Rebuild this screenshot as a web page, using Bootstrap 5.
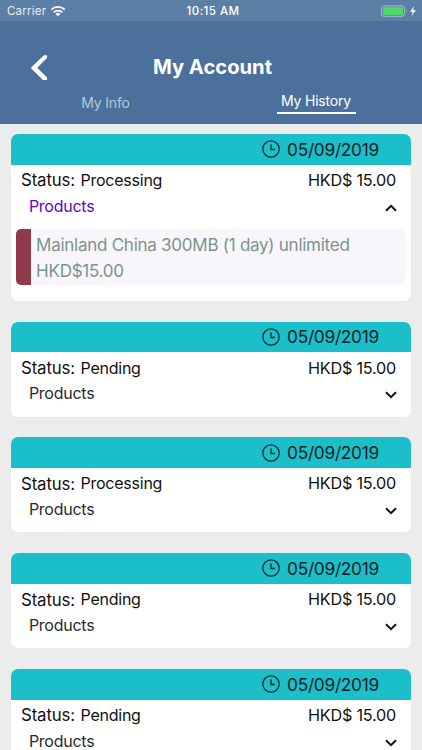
<!DOCTYPE html>
<html lang="en">
<head>
<meta charset="utf-8">
<meta name="viewport" content="width=device-width, initial-scale=1">
<title>My Account</title>
<link href="https://cdn.jsdelivr.net/npm/bootstrap@5.3.0/dist/css/bootstrap.min.css" rel="stylesheet">
<style>
body{font-family:Inter,"Liberation Sans",sans-serif;color:#111;background:#ececec;height:750px;line-height:20px}
.screen{height:750px}
.topbar{background:#4a709b;height:123.5px;color:#fff}
.statusbar{background:#5c7fa5;height:21px;font-size:11.5px;padding:0 5px 0 7px}
.statusbar>div{flex:1 1 0}
.clock-text{font-weight:500;letter-spacing:.45px;padding-left:2px}
.carrier{letter-spacing:.22px;color:#e9eff5}
.titlebar{height:69px;padding-top:25px}
.back-btn{width:78px}
.page-title{font-size:20.2px;font-weight:700;line-height:42px;letter-spacing:-.02px;padding-left:3px}
.tab-link{font-size:14px;letter-spacing:-.2px;line-height:17px;color:#b9c8d8;border-bottom:2px solid transparent}
.tab-link.current{color:#fff;border-color:#fff;padding:1px 5px 3px 4px}
.tab-info{padding-top:4px}
.orders{padding:10.3px 10.6px;gap:20.75px}
.order{border:0;border-radius:7px;overflow:hidden;height:95px;flex:none}
.order.open{height:167px}
.order-head{background:#1bbfca;height:30.75px;padding-right:32.5px;font-size:17.3px;letter-spacing:-.28px;color:#0d2023;gap:7px}
.date-text{padding-top:1px}
.order-row{height:30.5px;padding:0 15.3px 0 10.4px}
.label-text{font-size:16.8px;letter-spacing:-.12px;padding-top:1px}
.state-text{font-size:16px;letter-spacing:-.24px;margin-left:5.5px}
.price{font-size:16.2px;letter-spacing:-.2px}
.prod-row{height:21px;padding:0 14px 0 18.3px;font-size:16px;letter-spacing:-.25px;color:#2b2b2b}
.open .prod-row{color:#6200d8}
.item{background:#f8f6fa;border-radius:5px;margin:12.8px 5px 0;height:56.5px;overflow:hidden;color:#7b9490;font-size:17px;letter-spacing:-.26px;line-height:26px}
.item-bar{width:15.5px;background:#8e3a49}
.item-body{padding:3px 0 0 5px;white-space:nowrap}
</style>
<script src="https://cdn.jsdelivr.net/npm/bootstrap@5.3.0/dist/js/bootstrap.bundle.min.js"></script>
</head>
<body class="overflow-hidden">
<svg class="d-none" xmlns="http://www.w3.org/2000/svg">
  <symbol id="clock" viewBox="0 0 18 18"><circle cx="9" cy="9" r="8.2" fill="none" stroke="#0d2b30" stroke-width="1.3"/><path d="M9 4.5V9.5H12.8" fill="none" stroke="#0d2b30" stroke-width="1.3"/></symbol>
  <symbol id="down" viewBox="0 0 12 8"><path d="M1 1.2 6 6.2 11 1.2" fill="none" stroke="#111" stroke-width="2"/></symbol>
  <symbol id="up" viewBox="0 0 12 8"><path d="M1 6.8 6 1.8 11 6.8" fill="none" stroke="#111" stroke-width="2"/></symbol>
</svg>
<div class="screen d-flex flex-column overflow-hidden">
  <header class="topbar flex-shrink-0">
    <div class="statusbar d-flex align-items-center">
      <div class="carrier d-flex align-items-center"><span>Carrier</span>
        <svg class="ms-1" width="16" height="12" viewBox="0 0 16 12"><g fill="none" stroke="#fff" stroke-width="1.9"><path d="M1.3 4.6a9.6 9.6 0 0 1 13.4 0"/><path d="M3.8 7.3a6 6 0 0 1 8.4 0"/></g><path d="M8 11.3 5.6 9a3.4 3.4 0 0 1 4.8 0z" fill="#fff"/></svg>
      </div>
      <div class="clock-text text-center">10:15 AM</div>
      <div class="d-flex justify-content-end align-items-center">
        <svg width="37" height="12" viewBox="0 0 37 12"><rect x="1.5" y=".9" width="23" height="10.4" rx="2.6" fill="none" stroke="#a9bdd0"/><rect x="3" y="2.3" width="20" height="7.6" rx="1.2" fill="#4cd964"/><path d="M26 4.3q1.6 1.8 0 3.6z" fill="#a9bdd0"/><path d="M34 1 30.2 6.7H32.8L31.4 11 35.9 5.2H33.2z" fill="#fff"/></svg>
      </div>
    </div>
    <div class="titlebar d-flex">
      <div class="back-btn d-flex justify-content-center align-items-start pt-2"><svg width="18" height="28" viewBox="0 0 18 28"><path d="M14 1.2H17V4L7.2 13.8 17 23.5V26H13L1.3 14.5V13.2Z" fill="#fff"/></svg></div>
      <div class="page-title flex-fill text-center">My Account</div>
      <div class="back-btn"></div>
    </div>
    <nav class="d-flex">
      <div class="w-50 text-center"><span class="tab-link tab-info d-inline-block">My Info</span></div>
      <div class="w-50 text-center"><span class="tab-link current d-inline-block">My History</span></div>
    </nav>
  </header>
  <main class="orders d-flex flex-column">
    <section class="order card open">
      <div class="order-head d-flex align-items-center justify-content-end"><svg width="18" height="18"><use href="#clock"/></svg><span class="date-text">05/09/2019</span></div>
      <div class="order-row d-flex align-items-center"><span class="label-text">Status:</span><span class="state-text">Processing</span><span class="price ms-auto">HKD$ 15.00</span></div>
      <div class="prod-row d-flex align-items-center justify-content-between"><span>Products</span><svg class="mt-1" width="12" height="8"><use href="#up"/></svg></div>
      <div class="item d-flex"><div class="item-bar"></div><div class="item-body"><div class="item-name">Mainland China 300MB (1 day) unlimited</div><div class="item-price">HKD$15.00</div></div></div>
    </section>
    <section class="order card">
      <div class="order-head d-flex align-items-center justify-content-end"><svg width="18" height="18"><use href="#clock"/></svg><span class="date-text">05/09/2019</span></div>
      <div class="order-row d-flex align-items-center"><span class="label-text">Status:</span><span class="state-text">Pending</span><span class="price ms-auto">HKD$ 15.00</span></div>
      <div class="prod-row d-flex align-items-center justify-content-between"><span>Products</span><svg class="mt-1" width="12" height="8"><use href="#down"/></svg></div>
    </section>
    <section class="order card">
      <div class="order-head d-flex align-items-center justify-content-end"><svg width="18" height="18"><use href="#clock"/></svg><span class="date-text">05/09/2019</span></div>
      <div class="order-row d-flex align-items-center"><span class="label-text">Status:</span><span class="state-text">Processing</span><span class="price ms-auto">HKD$ 15.00</span></div>
      <div class="prod-row d-flex align-items-center justify-content-between"><span>Products</span><svg class="mt-1" width="12" height="8"><use href="#down"/></svg></div>
    </section>
    <section class="order card">
      <div class="order-head d-flex align-items-center justify-content-end"><svg width="18" height="18"><use href="#clock"/></svg><span class="date-text">05/09/2019</span></div>
      <div class="order-row d-flex align-items-center"><span class="label-text">Status:</span><span class="state-text">Pending</span><span class="price ms-auto">HKD$ 15.00</span></div>
      <div class="prod-row d-flex align-items-center justify-content-between"><span>Products</span><svg class="mt-1" width="12" height="8"><use href="#down"/></svg></div>
    </section>
    <section class="order card">
      <div class="order-head d-flex align-items-center justify-content-end"><svg width="18" height="18"><use href="#clock"/></svg><span class="date-text">05/09/2019</span></div>
      <div class="order-row d-flex align-items-center"><span class="label-text">Status:</span><span class="state-text">Pending</span><span class="price ms-auto">HKD$ 15.00</span></div>
      <div class="prod-row d-flex align-items-center justify-content-between"><span>Products</span><svg class="mt-1" width="12" height="8"><use href="#down"/></svg></div>
    </section>
  </main>
</div>
</body>
</html>
